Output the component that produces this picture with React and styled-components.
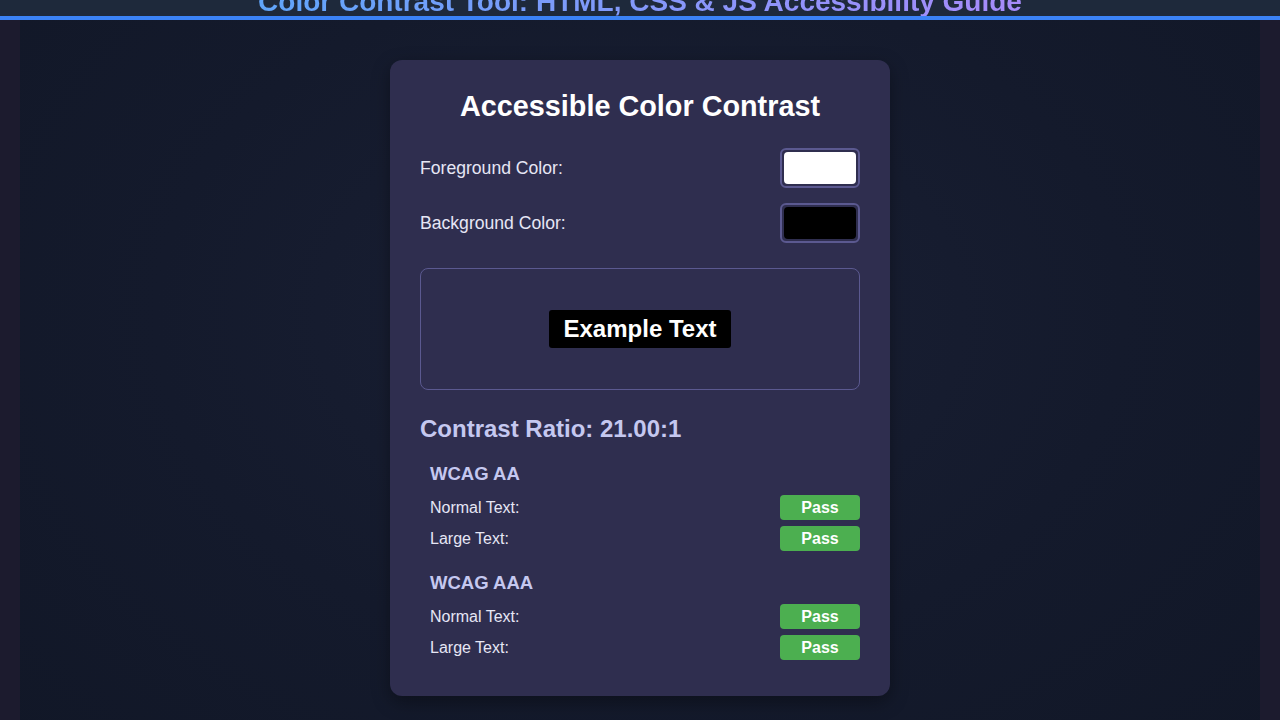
import React from 'react';
import styled, { createGlobalStyle } from 'styled-components';

const GlobalStyle = createGlobalStyle`
  html, body {
    margin: 0;
    padding: 0;
    background: #1c1b2e;
    font-family: 'Liberation Sans', Arial, sans-serif;
    overflow: hidden;
  }
`;

const Header = styled.header`
  height: 16px;
  background: #1e293b;
  border-bottom: 4px solid #3b82f6;
  overflow: hidden;
  display: flex;
  justify-content: center;
  align-items: flex-end;
`;

const PageTitle = styled.h1`
  margin: 0 0 -2px;
  font-size: 28px;
  line-height: 32px;
  font-weight: 700;
  white-space: nowrap;
  background: linear-gradient(90deg, #60a5fa, #a78bfa);
  -webkit-background-clip: text;
  background-clip: text;
  color: transparent;
`;

const Main = styled.main`
  margin: 0 20px;
  min-height: 700px;
  padding-top: 40px;
  background: radial-gradient(ellipse at 50% 40%, #1a2035 0%, #141a2c 55%, #111727 100%);
  display: flex;
  justify-content: center;
  align-items: flex-start;
`;

const Card = styled.section`
  width: 500px;
  box-sizing: border-box;
  padding: 30px 30px 30px;
  background: #2f2e4f;
  border-radius: 12px;
  box-shadow: 0 6px 18px rgba(0, 0, 0, 0.35);
  color: #e6e6f5;
`;

const CardTitle = styled.h2`
  margin: 0 0 26px;
  text-align: center;
  font-size: 28.8px;
  line-height: 32px;
  color: #ffffff;
`;

const ColorRow = styled.div`
  display: flex;
  justify-content: space-between;
  align-items: center;
  margin-bottom: 15px;
`;

const Label = styled.label`
  font-size: 17.6px;
  color: #e6e6f5;
`;

const Swatch = styled.div`
  width: 80px;
  height: 40px;
  box-sizing: border-box;
  padding: 2px;
  border: 2px solid #5b5990;
  border-radius: 6px;
  background: #2f2e4f;

  span {
    display: block;
    width: 100%;
    height: 100%;
    border-radius: 4px;
    background: ${(p) => p.$color};
  }
`;

const Preview = styled.div`
  margin-top: 25px;
  height: 122px;
  box-sizing: border-box;
  border: 1px solid #5b5990;
  border-radius: 8px;
  display: flex;
  align-items: center;
  justify-content: center;
`;

const Sample = styled.span`
  padding: 4px 15px;
  border-radius: 3px;
  background: ${(p) => p.$bg};
  color: ${(p) => p.$fg};
  font-size: 24px;
  line-height: 30px;
  font-weight: 700;
`;

const Ratio = styled.h3`
  margin: 24px 0 19px;
  font-size: 24px;
  line-height: 30px;
  font-weight: 700;
  color: #c5c8f0;
`;

const Level = styled.div`
  padding-left: 10px;
  margin-bottom: 21px;

  &:last-child {
    margin-bottom: 0;
  }
`;

const LevelTitle = styled.h4`
  margin: 0 0 10px;
  font-size: 18.5px;
  line-height: 22px;
  font-weight: 700;
  color: #c5c8f0;
`;

const ResultRow = styled.div`
  display: flex;
  justify-content: space-between;
  align-items: center;
  margin-bottom: 6px;
  font-size: 16px;
  color: #e6e6f5;
`;

const Badge = styled.span`
  width: 80px;
  height: 25px;
  border-radius: 4px;
  background: ${(p) => (p.$pass ? '#4caf50' : '#e53935')};
  color: #ffffff;
  font-weight: 700;
  font-size: 16px;
  display: flex;
  align-items: center;
  justify-content: center;
`;

const levels = [
  { name: 'WCAG AA', normal: true, large: true },
  { name: 'WCAG AAA', normal: true, large: true },
];

export default function App() {
  return (
    <>
      <GlobalStyle />
      <Header>
        <PageTitle>Color Contrast Tool: HTML, CSS &amp; JS Accessibility Guide</PageTitle>
      </Header>
      <Main>
        <Card>
          <CardTitle>Accessible Color Contrast</CardTitle>
          <ColorRow>
            <Label>Foreground Color:</Label>
            <Swatch $color="#ffffff"><span /></Swatch>
          </ColorRow>
          <ColorRow>
            <Label>Background Color:</Label>
            <Swatch $color="#000000"><span /></Swatch>
          </ColorRow>
          <Preview>
            <Sample $fg="#ffffff" $bg="#000000">Example Text</Sample>
          </Preview>
          <Ratio>Contrast Ratio: 21.00:1</Ratio>
          {levels.map((l) => (
            <Level key={l.name}>
              <LevelTitle>{l.name}</LevelTitle>
              <ResultRow>
                <span>Normal Text:</span>
                <Badge $pass={l.normal}>{l.normal ? 'Pass' : 'Fail'}</Badge>
              </ResultRow>
              <ResultRow>
                <span>Large Text:</span>
                <Badge $pass={l.large}>{l.large ? 'Pass' : 'Fail'}</Badge>
              </ResultRow>
            </Level>
          ))}
        </Card>
      </Main>
    </>
  );
}
